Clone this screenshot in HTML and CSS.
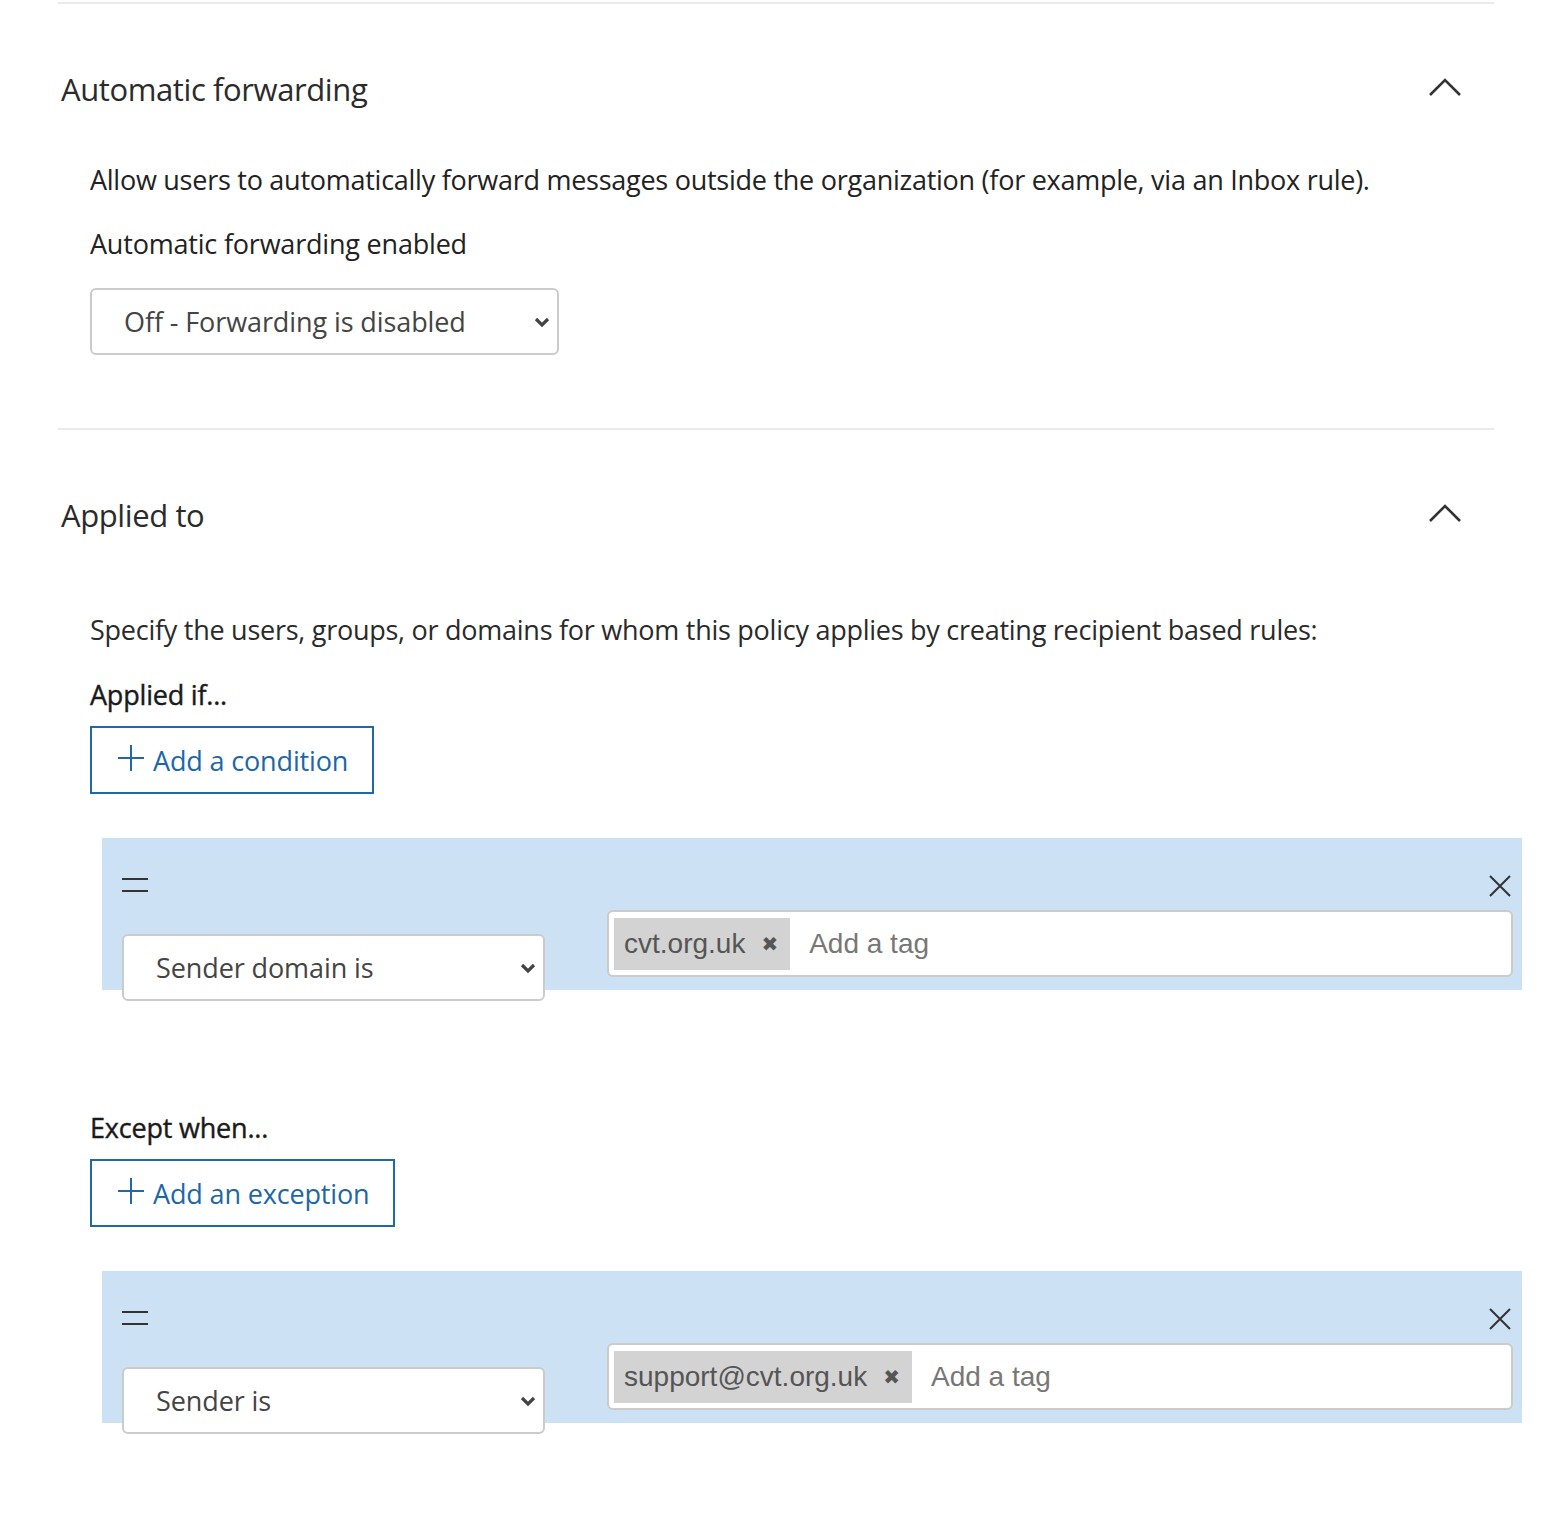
FILE: index.html
```html
<!DOCTYPE html>
<html lang="en">
<head>
<meta charset="utf-8">
<title>Automatic forwarding</title>
<link rel="stylesheet" href="styles.css">
</head>
<body>
<div class="page">
  <section class="section">
    <div class="sec-head">
      <h2 class="sec-title">Automatic forwarding</h2>
      <svg class="chev-up" width="34" height="20" viewBox="0 0 34 20"><polyline points="2,18 17,3 32,18" fill="none" stroke="#333" stroke-width="2.6"/></svg>
    </div>
    <div class="sec-body sec-body-first">
      <p class="desc desc-first">Allow users to automatically forward messages outside the organization (for example, via an Inbox rule).</p>
      <p class="label">Automatic forwarding enabled</p>
      <div class="select select-fwd">
        <span class="select-text">Off - Forwarding is disabled</span>
        <svg class="select-arrow" width="16" height="12" viewBox="0 0 16 12"><polyline points="2,3 8,9 14,3" fill="none" stroke="#444" stroke-width="3.2"/></svg>
      </div>
    </div>
  </section>

  <section class="section">
    <div class="sec-head">
      <h2 class="sec-title">Applied to</h2>
      <svg class="chev-up" width="34" height="20" viewBox="0 0 34 20"><polyline points="2,18 17,3 32,18" fill="none" stroke="#333" stroke-width="2.6"/></svg>
    </div>
    <div class="sec-body sec-body-last">
      <p class="desc desc-second">Specify the users, groups, or domains for whom this policy applies by creating recipient based rules:</p>
      <p class="label label-strong">Applied if...</p>
      <button class="add-btn" type="button">
        <svg class="plus" width="28" height="28" viewBox="0 0 28 28"><path d="M14 1V27M1 14H27" stroke="#1f69a8" stroke-width="2"/></svg>
        <span>Add a condition</span>
      </button>

      <div class="rule">
        <div class="rule-top">
          <svg class="handle" width="28" height="16" viewBox="0 0 28 16"><path d="M1 2H27M1 14H27" stroke="#333" stroke-width="2"/></svg>
          <svg class="close" width="22" height="22" viewBox="0 0 22 22"><path d="M1 1L21 21M21 1L1 21" stroke="#333" stroke-width="2"/></svg>
        </div>
        <div class="rule-row">
          <div class="select select-rule">
            <span class="select-text">Sender domain is</span>
            <svg class="select-arrow" width="16" height="12" viewBox="0 0 16 12"><polyline points="2,3 8,9 14,3" fill="none" stroke="#444" stroke-width="3.2"/></svg>
          </div>
          <div class="tag-input">
            <span class="tag"><span class="tag-text">cvt.org.uk</span><span class="tag-x">✖</span></span>
            <span class="tag-placeholder">Add a tag</span>
          </div>
        </div>
      </div>

      <p class="label label-strong label-except">Except when...</p>
      <button class="add-btn" type="button">
        <svg class="plus" width="28" height="28" viewBox="0 0 28 28"><path d="M14 1V27M1 14H27" stroke="#1f69a8" stroke-width="2"/></svg>
        <span>Add an exception</span>
      </button>

      <div class="rule">
        <div class="rule-top">
          <svg class="handle" width="28" height="16" viewBox="0 0 28 16"><path d="M1 2H27M1 14H27" stroke="#333" stroke-width="2"/></svg>
          <svg class="close" width="22" height="22" viewBox="0 0 22 22"><path d="M1 1L21 21M21 1L1 21" stroke="#333" stroke-width="2"/></svg>
        </div>
        <div class="rule-row">
          <div class="select select-rule">
            <span class="select-text">Sender is</span>
            <svg class="select-arrow" width="16" height="12" viewBox="0 0 16 12"><polyline points="2,3 8,9 14,3" fill="none" stroke="#444" stroke-width="3.2"/></svg>
          </div>
          <div class="tag-input">
            <span class="tag"><span class="tag-text">support@cvt.org.uk</span><span class="tag-x">✖</span></span>
            <span class="tag-placeholder">Add a tag</span>
          </div>
        </div>
      </div>
    </div>
  </section>
</div>
</body>
</html>
```

FILE: styles.css
```css
html, body {
  margin: 0;
  padding: 0;
  background: #ffffff;
}

body {
  font-family: "Open Sans", "Noto Sans", "Liberation Sans", sans-serif;
  color: #262626;
}

.page {
  padding-top: 2px;
  padding-left: 58px;
  width: 1436px;
}

.section {
  border-top: 2px solid #ebebeb;
}

.sec-head {
  display: flex;
  align-items: center;
  justify-content: space-between;
  margin-top: 63px;
  height: 44px;
  padding-right: 32px;
}

.sec-title {
  margin: 0 0 0 3px;
  font-size: 31px;
  font-weight: 400;
  line-height: 44px;
  color: #2b2b2b;
  letter-spacing: -0.4px;
}

.chev-up {
  display: block;
  margin-top: -4px;
}

.sec-body {
  padding-left: 32px;
}

.sec-body-first {
  padding-bottom: 73px;
}

.sec-body-last {
  padding-bottom: 112px;
}

.desc {
  margin: 0;
  font-size: 27px;
  line-height: 40px;
  color: #222;
  letter-spacing: -0.26px;
}

.desc-first {
  margin-top: 49px;
}

.desc-second {
  margin-top: 73px;
  color: #2a2a2a;
}

.label {
  margin: 24px 0 0 0;
  font-size: 27px;
  line-height: 40px;
  color: #222;
  letter-spacing: -0.2px;
}

.label-strong {
  margin-top: 25px;
  font-size: 27px;
  color: #1a1a1a;
  -webkit-text-stroke: 0.4px #1a1a1a;
}

.label-except {
  margin-top: 118px;
}

.select {
  box-sizing: border-box;
  display: flex;
  align-items: center;
  justify-content: space-between;
  height: 67px;
  border: 2px solid #cbcbcb;
  border-radius: 6px;
  background: #fff;
  padding: 0 7px 0 32px;
}

.select-fwd {
  margin-top: 24px;
  width: 469px;
}

.select-text {
  font-size: 27px;
  color: #444;
  letter-spacing: -0.1px;
}

.select-arrow {
  display: block;
}

.add-btn {
  box-sizing: border-box;
  display: flex;
  align-items: center;
  gap: 8px;
  margin-top: 11px;
  height: 68px;
  padding: 0 24px 0 25px;
  border: 2px solid #1f69a8;
  background: #fff;
  font-family: inherit;
  font-size: 27px;
  color: #1d67a6;
  letter-spacing: -0.15px;
  cursor: pointer;
}

.plus {
  display: block;
  margin-top: -4px;
}

.rule {
  margin-top: 44px;
  margin-left: 12px;
  margin-right: -28px;
  height: 152px;
  background: #cce1f4;
  display: flex;
  flex-direction: column;
}

.rule-top {
  flex: none;
  display: flex;
  justify-content: space-between;
  align-items: flex-start;
  height: 72px;
  padding: 39px 11px 0 19px;
  box-sizing: border-box;
}

.handle {
  display: block;
}

.close {
  display: block;
  margin-top: -2px;
}

.rule-row {
  flex: none;
  display: flex;
  align-items: flex-start;
  gap: 62px;
  padding: 0 9px 0 20px;
}

.select-rule {
  margin-top: 24px;
  width: 423px;
  flex: none;
}

.tag-input {
  box-sizing: border-box;
  flex: 1;
  height: 67px;
  border: 2px solid #cbcbcb;
  border-radius: 6px;
  background: #fff;
  display: flex;
  align-items: center;
  padding: 0 5px;
  gap: 19px;
}

.tag {
  display: flex;
  align-items: center;
  height: 52px;
  background: #d3d3d3;
  padding: 0 12px 0 10px;
  font-family: "Liberation Sans", Arial, sans-serif;
}

.tag-text {
  font-size: 28px;
  color: #555;
}

.tag-x {
  margin-left: 16px;
  font-family: "DejaVu Sans", sans-serif;
  font-size: 20px;
  color: #555;
}

.tag-placeholder {
  font-family: "Liberation Sans", Arial, sans-serif;
  font-size: 28px;
  color: #777;
}
```
